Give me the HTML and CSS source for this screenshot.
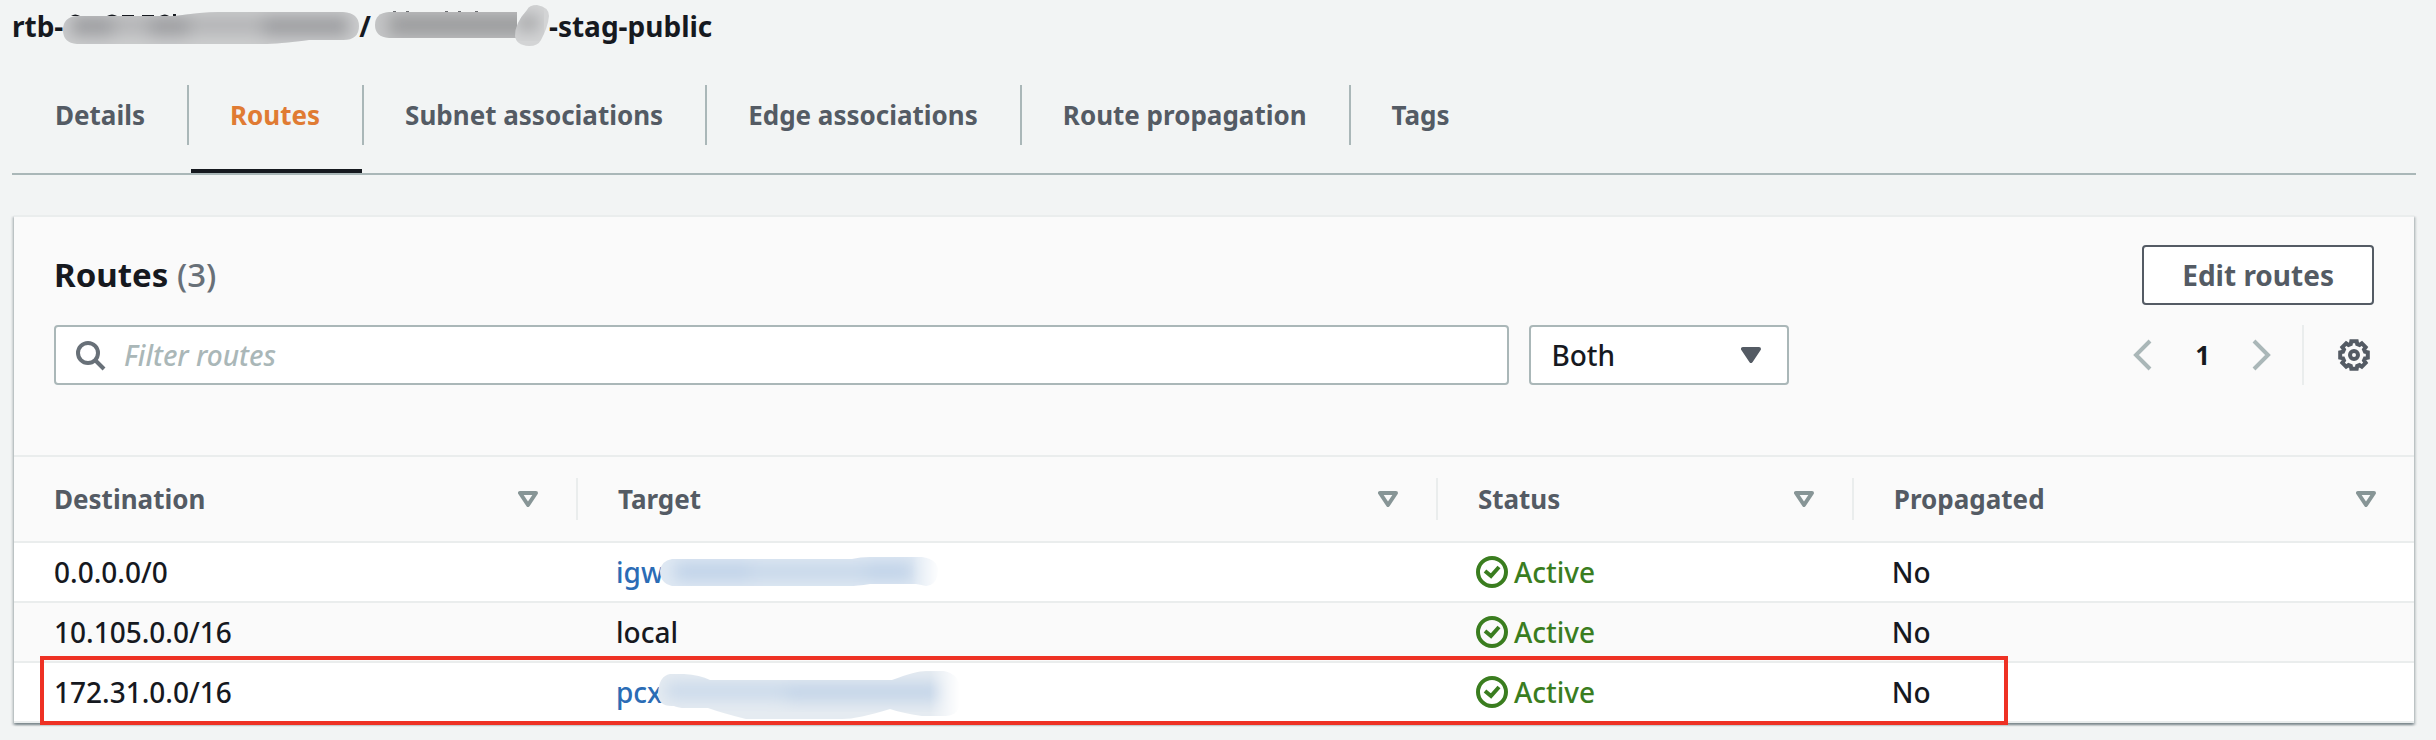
FILE: index.html
```html
<!DOCTYPE html>
<html lang="en">
<head>
<meta charset="utf-8">
<title>Route table</title>
<link rel="stylesheet" href="styles.css">
</head>
<body>
<svg class="defs" aria-hidden="true">
  <defs>
    <filter id="soft" x="-20%" y="-60%" width="140%" height="220%"><feGaussianBlur stdDeviation="8"/></filter>
    <linearGradient id="fade" x1="0" x2="1"><stop offset="0.9" stop-color="#fff"/><stop offset="1" stop-color="#000"/></linearGradient>
    <symbol id="sort" viewBox="0 0 20 16"><path d="M2 2h16l-8 12z" fill="none" stroke="#879596" stroke-width="4" stroke-linejoin="round"/></symbol>
    <symbol id="check" viewBox="0 0 32 32"><g fill="none" stroke="#3a7d1f" stroke-width="4"><circle cx="16" cy="16" r="14"/><path d="M9 15l6 5 8-9"/></g></symbol>
  </defs>
</svg>
<main class="page">
  <h1 class="title">
    <span>rtb-</span>
    <svg class="mask mask-id" width="296" height="36" viewBox="0 0 296 36" aria-hidden="true">
      <clipPath id="c1"><path d="M14 8H112Q140 4 155 4H280Q296 5 296 18Q296 32 280 32H246Q215 36 200 36H14Q0 35 0 22Q0 9 14 8Z"/></clipPath>
      <g fill="#16191f"><path d="M8 8q4-3 9 0zM44 8q5-3 10 0zM59 7h12v1H59zM79 7h12v1H79zM97 8q5-3 9 0zM110 6h3v2h-3z"/></g>
      <g clip-path="url(#c1)"><rect width="296" height="36" fill="#cccdce"/><g filter="url(#soft)" fill="#9c9da0"><rect x="50" y="8" width="150" height="18" fill="#b2b3b5"/><rect x="8" y="8" width="42" height="20"/><rect x="86" y="8" width="40" height="20"/><rect x="200" y="8" width="86" height="20"/></g></g>
    </svg>
    <span>/</span>
    <svg class="mask mask-name" width="174" height="42" viewBox="0 0 174 42" aria-hidden="true">
      <clipPath id="c2"><path d="M14 7H142V33H14Q0 32 0 20Q0 8 14 7Z"/></clipPath>
      <clipPath id="c3"><path d="M152 5Q154 0 162 0Q174 2 174 11Q173 22 166 35Q163 41 154 41Q141 40 140 31Q140 18 152 5Z"/></clipPath>
      <g fill="#6b6d71"><path d="M18 6h3v1h-3zM31 6h3v1h-3zM70 6h3v1h-3zM83 6h3v1h-3zM100 6h3v1h-3z"/></g>
      <g clip-path="url(#c2)"><rect width="174" height="42" fill="#c4c5c6"/><rect x="14" y="9" width="150" height="22" fill="#9b9c9e" filter="url(#soft)"/></g>
      <g clip-path="url(#c3)"><rect width="174" height="42" fill="#d3d4d5"/><rect x="142" y="10" width="22" height="16" fill="#a4a5a7" filter="url(#soft)"/></g>
    </svg>
    <span>-stag-public</span>
  </h1>

  <nav class="tabs">
    <a class="tab" href="#details">Details</a>
    <a class="tab tab-active" href="#routes" aria-current="page">Routes</a>
    <a class="tab" href="#subnets">Subnet associations</a>
    <a class="tab" href="#edges">Edge associations</a>
    <a class="tab" href="#propagation">Route propagation</a>
    <a class="tab" href="#tags">Tags</a>
  </nav>

  <section class="panel" id="routes">
    <header class="panel-head">
      <div class="head-row">
        <h2 class="heading">Routes <span class="count">(3)</span></h2>
        <button class="edit" type="button">Edit routes</button>
      </div>
      <div class="head-row">
        <div class="filters">
          <label class="search">
            <svg class="search-icon" width="30" height="30" viewBox="0 0 30 30" aria-hidden="true"><g fill="none" stroke="#687078" stroke-width="4"><circle cx="12" cy="12" r="10"/><path d="M19 19l9 9"/></g></svg>
            <input class="search-input" type="text" placeholder="Filter routes" aria-label="Filter routes">
          </label>
          <div class="select">
            <select class="select-input" aria-label="Route state"><option>Both</option></select>
            <svg class="select-icon" width="20" height="16" viewBox="0 0 20 16" aria-hidden="true"><path d="M2 2h16l-8 12z" fill="#545b64" stroke="#545b64" stroke-width="4" stroke-linejoin="round"/></svg>
          </div>
        </div>
        <div class="pager">
          <button class="icon-button" type="button" aria-label="Previous page"><svg width="20" height="32" viewBox="0 0 20 32"><path d="M17 2L3 16l14 14" fill="none" stroke="#aab7b8" stroke-width="4"/></svg></button>
          <button class="page-number" type="button">1</button>
          <button class="icon-button" type="button" aria-label="Next page"><svg width="20" height="32" viewBox="0 0 20 32"><path d="M2 2l14 14L2 30" fill="none" stroke="#aab7b8" stroke-width="4"/></svg></button>
          <div class="settings">
            <button class="icon-button" type="button" aria-label="Preferences"><svg width="32" height="32" viewBox="-16 -16 32 32"><g fill="none" stroke="#545b64" stroke-width="4"><path d="M-3.2-11L-2.7-13.8 2.7-13.8 3.2-11 5.5-10 7.85-11.67 11.67-7.85 10-5.5 11-3.2 13.8-2.7 13.8 2.7 11 3.2 10 5.5 11.67 7.85 7.85 11.67 5.5 10 3.2 11 2.7 13.8-2.7 13.8-3.2 11-5.5 10-7.85 11.67-11.67 7.85-10 5.5-11 3.2-13.8 2.7-13.8-2.7-11-3.2-10-5.5-11.67-7.85-7.85-11.67-5.5-10Z"/><circle r="4"/></g></svg></button>
          </div>
        </div>
      </div>
    </header>

    <div class="table-wrap">
      <table class="table">
        <colgroup><col class="col-destination"><col class="col-target"><col class="col-status"><col></colgroup>
        <thead>
          <tr>
            <th scope="col"><div class="th">Destination<svg class="sort" width="20" height="16"><use href="#sort"/></svg></div></th>
            <th scope="col"><div class="th">Target<svg class="sort" width="20" height="16"><use href="#sort"/></svg></div></th>
            <th scope="col"><div class="th">Status<svg class="sort" width="20" height="16"><use href="#sort"/></svg></div></th>
            <th scope="col"><div class="th">Propagated<svg class="sort" width="20" height="16"><use href="#sort"/></svg></div></th>
          </tr>
        </thead>
        <tbody>
          <tr>
            <td>0.0.0.0/0</td>
            <td><div class="target"><a class="link" href="#igw">igw</a><svg class="smudge" width="280" height="30" viewBox="0 0 280 30" aria-hidden="true">
              <clipPath id="c4"><path d="M12 2H192Q200 0 210 0H262Q278 2 278 14Q277 28 266 29Q262 28 256 27H210Q196 29 190 29H12Q0 26 0 14Q1 4 12 2Z"/></clipPath>
              <mask id="m1"><rect width="280" height="30" fill="url(#fade)"/></mask>
              <g clip-path="url(#c4)" mask="url(#m1)"><rect width="280" height="30" fill="#e0e9f3"/><g filter="url(#soft)" fill="#bfd2e8"><rect x="14" y="5" width="76" height="19"/><rect x="90" y="5" width="116" height="19" fill="#c8d8ea"/><rect x="206" y="5" width="46" height="19"/></g></g>
            </svg></div></td>
            <td><span class="status"><svg width="32" height="32" aria-hidden="true"><use href="#check"/></svg>Active</span></td>
            <td>No</td>
          </tr>
          <tr>
            <td>10.105.0.0/16</td>
            <td>local</td>
            <td><span class="status"><svg width="32" height="32" aria-hidden="true"><use href="#check"/></svg>Active</span></td>
            <td>No</td>
          </tr>
          <tr>
            <td>172.31.0.0/16</td>
            <td><div class="target"><a class="link" href="#pcx">pcx</a><svg class="smudge smudge-tall" width="302" height="48" viewBox="0 0 302 48" aria-hidden="true">
              <clipPath id="c5"><path d="M12 3H26Q42 4 52 9H234Q258 0 268 0H286Q302 3 302 20V32Q301 44 288 45H264Q244 42 232 38Q200 48 184 48H88Q64 42 50 37H24Q18 36 16 35Q0 36 0 22Q1 5 12 3Z"/></clipPath>
              <mask id="m2"><rect width="302" height="48" fill="url(#fade)"/></mask>
              <g clip-path="url(#c5)" mask="url(#m2)"><rect width="302" height="48" fill="#e5ebf1"/><g filter="url(#soft)" fill="#c1d3e8"><rect x="8" y="12" width="120" height="16" fill="#c8d8ea"/><rect x="128" y="12" width="156" height="18"/></g></g>
            </svg></div></td>
            <td><span class="status"><svg width="32" height="32" aria-hidden="true"><use href="#check"/></svg>Active</span></td>
            <td>No</td>
          </tr>
        </tbody>
      </table>
      <div class="highlight"></div>
    </div>
  </section>
</main>
</body>
</html>
```
FILE: styles.css
```css
* { box-sizing: border-box; }
body {
  margin: 0;
  background: #f2f4f4;
  color: #16191f;
  font: 500 28px/36px "Noto Sans", "Open Sans", sans-serif;
}
button, input, select { font: inherit; color: inherit; margin: 0; }
.defs { position: absolute; width: 0; height: 0; }
.page { padding: 8px 20px 16px 12px; }

.title {
  display: flex;
  align-items: center;
  height: 36px;
  margin: 0;
  font-size: 28px;
  line-height: 36px;
  font-weight: 700;
}
.mask { flex: none; }
.mask-name { margin-left: 4px; }

.tabs {
  display: flex;
  margin-top: 41px;
  padding-bottom: 28px;
  border-bottom: 2px solid #aab7b8;
}
.tab {
  position: relative;
  padding: 12px 42px 12px 41px;
  border-right: 2px solid #aab7b8;
  color: #545b64;
  font-size: 26px;
  font-weight: 700;
  text-decoration: none;
}
.tab:first-child { padding-left: 43px; }
.tab:last-child { border-right: 0; }
.tab-active { color: #e07b33; }
.tab-active::after {
  content: "";
  position: absolute;
  left: 2px;
  right: 0;
  bottom: -28px;
  height: 4px;
  background: #16191f;
}

.panel {
  margin: 40px 2px 0;
  border-top: 2px solid #eaeded;
  background: #fafafa;
  box-shadow: 0 2px 2px rgba(0, 28, 36, .3), 2px 2px 2px rgba(0, 28, 36, .15), -2px 2px 2px rgba(0, 28, 36, .15);
}
.panel-head {
  display: grid;
  gap: 20px;
  padding: 28px 40px 70px;
}
.head-row {
  display: flex;
  align-items: center;
  justify-content: space-between;
}
.heading { margin: 0; font-size: 33px; line-height: 44px; font-weight: 700; }
.count { color: #687078; font-weight: 500; }
.edit {
  height: 60px;
  padding: 0 38px;
  border: 2px solid #545b64;
  border-radius: 4px;
  background: #fff;
  color: #545b64;
  font-weight: 700;
}
.filters { display: flex; flex: 1; gap: 20px; }
.search { position: relative; width: 70%; }
.search-input {
  width: 100%;
  height: 60px;
  padding: 0 20px 0 68px;
  border: 2px solid #aab7b8;
  border-radius: 4px;
  background: #fff;
}
.search-input::placeholder { color: #aab7b8; font-style: italic; opacity: 1; }
.search-icon { position: absolute; left: 22px; top: 16px; }
.select { position: relative; width: 260px; }
.select-input {
  width: 100%;
  height: 60px;
  padding: 0 20px;
  border: 2px solid #aab7b8;
  border-radius: 4px;
  background: #fff;
  appearance: none;
}
.select-icon { position: absolute; right: 28px; top: 22px; pointer-events: none; }
.pager { display: flex; align-items: center; gap: 42px; }
.icon-button, .page-number {
  display: flex;
  padding: 0;
  border: 0;
  background: none;
}
.page-number { font-size: 26px; font-weight: 700; }
.settings {
  display: flex;
  align-items: center;
  height: 60px;
  margin-left: -12px;
  padding: 0 4px 0 34px;
  border-left: 2px solid #eaeded;
}

.table-wrap { position: relative; }
.table { width: 100%; table-layout: fixed; border-collapse: separate; border-spacing: 0; }
.col-destination { width: 23.5%; }
.col-target { width: 35.83%; }
.col-status { width: 17.33%; }
.table th {
  padding: 21px 0;
  border-top: 2px solid #eaeded;
  border-bottom: 2px solid #eaeded;
  color: #545b64;
  font-size: 26px;
  font-weight: 700;
  text-align: left;
}
.th {
  display: flex;
  align-items: center;
  justify-content: space-between;
  height: 42px;
  padding: 0 38px 0 40px;
  border-right: 2px solid #eaeded;
}
th:last-child .th { border-right: 0; }
.table td { height: 60px; padding: 11px 38px; border-bottom: 2px solid #eaeded; background: #fff; }
.table tbody tr:nth-child(even) td { background: #fafafa; }
.table td:first-child { padding-left: 40px; }
.target { display: flex; align-items: center; height: 36px; }
.link { color: #2b6cb5; text-decoration: none; }
.smudge { flex: none; margin-left: -4px; }
.smudge-tall { margin-bottom: -5px; }
.status { display: flex; align-items: center; gap: 6px; color: #3a7d1f; }
.highlight {
  position: absolute;
  left: 26px;
  bottom: -2px;
  width: 82%;
  height: 69px;
  border: 4px solid #ee3124;
  pointer-events: none;
}
```
